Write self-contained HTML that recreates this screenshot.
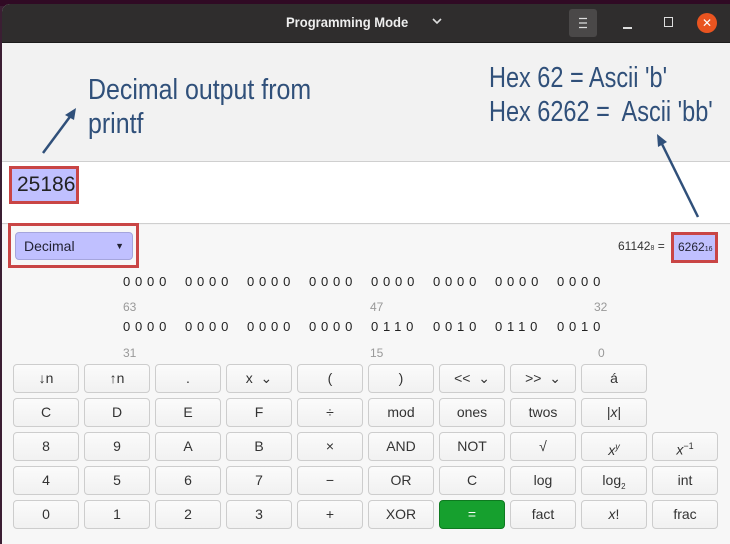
<!DOCTYPE html>
<html><head><style>
*{margin:0;padding:0;box-sizing:border-box}
body{width:730px;height:540px;overflow:hidden;background:#3b1e33;font-family:"Liberation Sans",sans-serif;position:relative}
.win{position:absolute;left:2px;top:4px;width:740px;height:540px;background:#f2f2f2;border-radius:8px 8px 0 0;overflow:hidden}
.tb{position:absolute;left:2px;top:4px;width:740px;height:39px;background:#2f2d2d;border-bottom:1px solid #1c1c1c;border-radius:8px 8px 0 0}
.ab{position:absolute;font-family:"Liberation Sans",sans-serif;color:#30507a;font-size:29px;line-height:34px;white-space:nowrap;transform-origin:0 0;transform:scaleX(0.86)}
.disp{position:absolute;left:0;top:157px;width:100%;height:63px;background:#fff;border-top:1px solid #cfcfcf;border-bottom:1px solid #cfcfcf}
.low{position:absolute;left:0;top:221px;width:100%;height:330px;background:#f7f7f7}
.btn{position:absolute;width:66px;height:29px;border:1px solid #cdcdcd;border-radius:4px;background:linear-gradient(#fbfbfb,#f1f1f1);font-size:14px;color:#333;text-align:center;line-height:27px}
.g{position:absolute;font-size:13px;color:#222;letter-spacing:4.8px}
.idx{position:absolute;font-size:12px;color:#999}
</style></head><body>
<div style="position:absolute;left:0;top:0;width:730px;height:6px;background:#300a24"></div>
<div class="win">
<div class="disp"><div style="position:absolute;left:7px;top:4px;width:70px;height:38px;border:3px solid #c94545;background:#c0c0ff;font-size:21px;color:#222;line-height:32px;padding-left:5px">25186</div></div>
<div class="low">
<div style="position:absolute;left:6px;top:-2px;width:131px;height:45px;border:3px solid #c94545"><div style="position:absolute;left:4px;top:6px;width:118px;height:28px;background:#c0c0ff;border:1px solid #a5a5dd;border-radius:4px;font-size:14px;color:#223;line-height:26px;padding-left:8px">Decimal<span style="position:absolute;right:8px;font-size:9px">▼</span></div></div>
<div style="position:absolute;left:616px;top:14px;font-size:12px;color:#333">61142<span style="font-size:7px">8</span> =</div>
<div style="position:absolute;left:669px;top:7px;width:47px;height:31px;border:3px solid #c94545;background:#c0c0ff;font-size:12px;color:#223;line-height:25px;padding-left:4px">6262<span style="font-size:7px">16</span></div>
<div id="bits"></div>
<div class="idx" style="left:121px;top:75px">63</div><div class="idx" style="left:368px;top:75px">47</div><div class="idx" style="left:592px;top:75px">32</div>
<div class="idx" style="left:121px;top:121px">31</div><div class="idx" style="left:368px;top:121px">15</div><div class="idx" style="left:596px;top:121px">0</div>
</div>
<div class="ab" style="left:86px;top:69px">Decimal output from<br>printf</div>
<div class="ab" style="left:487px;top:57px;transform:scaleX(0.81)">Hex 62 = Ascii 'b'<br>Hex 6262 =&nbsp; Ascii 'bb'</div>
</div>
<div class="tb"></div>
<div style="position:absolute;left:286px;top:14px;color:#eee;font-weight:bold;font-size:14px;transform-origin:0 0;transform:scaleX(0.93);white-space:nowrap">Programming Mode</div>
<svg style="position:absolute;left:431px;top:17px" width="12" height="10"><path d="M2 2l4 4 4-4" stroke="#ddd" stroke-width="1.6" fill="none"/></svg>
<div style="position:absolute;left:569px;top:9px;width:28px;height:28px;background:#4a4848;border-radius:3px"></div>
<svg style="position:absolute;left:577px;top:17px" width="12" height="12"><path d="M2 1.5h8M2 6h8M2 10.5h8" stroke="#ddd" stroke-width="1.2"/></svg>
<div style="position:absolute;left:623px;top:27px;width:9px;height:1.5px;background:#ddd"></div>
<div style="position:absolute;left:664px;top:17px;width:9px;height:10px;border:1.5px solid #ddd"></div>
<div style="position:absolute;left:697px;top:13px;width:20px;height:20px;border-radius:50%;background:#e95420;color:#fff;font-size:12px;text-align:center;line-height:20px">✕</div>
<svg style="position:absolute;left:0;top:0" width="730" height="540">
<path d="M43 153L72 114" stroke="#30507a" stroke-width="2.5"/><path d="M76 108l-11 7 9 5z" fill="#30507a"/>
<path d="M698 217L661 142" stroke="#30507a" stroke-width="2.5"/><path d="M657 134l1 13 9-5z" fill="#30507a"/>
</svg>
<div id="k"></div>
<script>
var r=[["↓n","↑n",".","x &nbsp;⌄","(",")","&lt;&lt; &nbsp;⌄","&gt;&gt; &nbsp;⌄","á"],["C","D","E","F","÷","mod","ones","twos","|<i>x</i>|"],["8","9","A","B","×","AND","NOT","√","<i>x<sup style='font-size:9px'>y</sup></i>","<i>x</i><sup style='font-size:9px'>−1</sup>"],["4","5","6","7","−","OR","C","log","log<sub style='font-size:8px'>2</sub>","int"],["0","1","2","3","+","XOR","=","fact","<i>x</i>!","frac"]];
var h="";r.forEach(function(row,i){row.forEach(function(t,j){var g=(i==4&&j==6);h+='<div class="btn" style="left:'+(13+j*71)+'px;top:'+(364+i*34)+'px;'+(g?'background:#16a02e;border-color:#0e7a20;color:#fff':'')+'">'+t+'</div>';});});
document.getElementById("k").innerHTML=h;
var rows=[["0000","0000","0000","0000","0000","0000","0000","0000"],["0000","0000","0000","0000","0110","0010","0110","0010"]];
var b="";rows.forEach(function(rw,i){rw.forEach(function(t,j){b+='<div class="g" style="left:'+(121+j*62)+'px;top:'+(49+i*45)+'px">'+t+'</div>';});});
document.getElementById("bits").innerHTML=b;
</script>
</body></html>
